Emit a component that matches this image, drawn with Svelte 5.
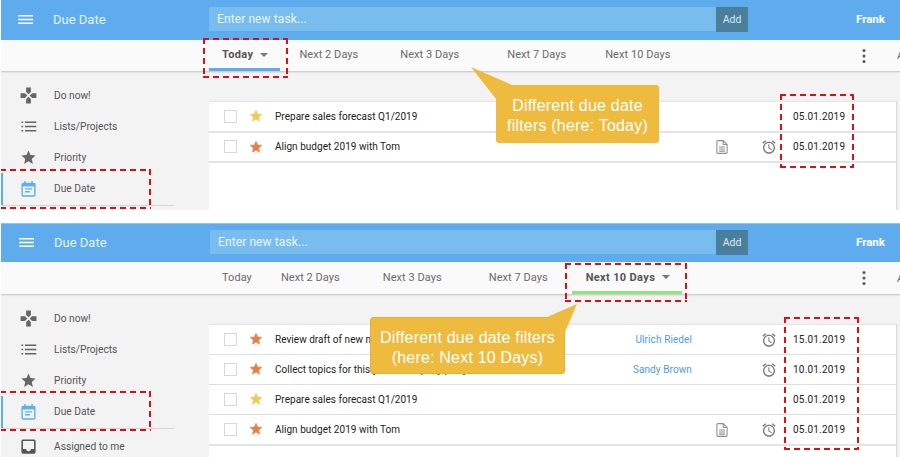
<script>
  const nav = [
    { label: 'Do now!', icon: 'games' },
    { label: 'Lists/Projects', icon: 'list' },
    { label: 'Priority', icon: 'star' },
    { label: 'Due Date', icon: 'cal', active: true },
    { label: 'Assigned to me', icon: 'inbox' }
  ];
  const t = (label, gap, active) => ({ label, gap, active });
  const panels = [
    {
      cls: 'first',
      accent: 'blue',
      tabs: [t('Today', 0, true), t('Next 2 Days', 19), t('Next 3 Days', 42), t('Next 7 Days', 48), t('Next 10 Days', 39)],
      tasks: [
        { text: 'Prepare sales forecast Q1/2019', star: 'y', date: '05.01.2019' },
        { text: 'Align budget 2019 with Tom', star: 'o', doc: true, alarm: true, date: '05.01.2019' }
      ]
    },
    {
      cls: 'second',
      accent: 'green',
      tabs: [t('Today', 13), t('Next 2 Days', 29), t('Next 3 Days', 43), t('Next 7 Days', 47), t('Next 10 Days', 24, true)],
      tasks: [
        { text: 'Review draft of new marketing plan', star: 'o', person: 'Ulrich Riedel', alarm: true, date: '15.01.2019' },
        { text: "Collect topics for this year's company party", star: 'o', person: 'Sandy Brown', alarm: true, date: '10.01.2019' },
        { text: 'Prepare sales forecast Q1/2019', star: 'y', date: '05.01.2019' },
        { text: 'Align budget 2019 with Tom', star: 'o', doc: true, alarm: true, date: '05.01.2019' }
      ]
    }
  ];
</script>

{#snippet navIcon(name)}
  <svg class="nav-icon {name}" viewBox="0 0 24 24">
    {#if name === 'games'}
      <path d="M15 7.500V2H9v5.500l3 3 3-3zM7.500 9H2v6h5.500l3-3-3-3zM9 16.500V22h6v-5.500l-3-3-3 3zM16.500 9l-3 3 3 3H22V9h-5.500z" />
    {:else if name === 'list'}
      <path d="M2 5h2.500v2H2zM7 5h16v2H7zM2 11h2.500v2H2zM7 11h16v2H7zM2 17h2.500v2H2zM7 17h16v2H7z" />
    {:else if name === 'star'}
      <path d="M12 17.300l6.200 3.700-1.600-7L22 9.200l-7.200-.6L12 2 9.200 8.600 2 9.200 7.500 14l-1.700 7z" />
    {:else if name === 'cal'}
      <path d="M6 1.500h2V4h8V1.500h2V4h1.500A2.500 2.500 0 0 1 22 6.500V21a2.500 2.500 0 0 1-2.500 2.500h-15A2.500 2.500 0 0 1 2 21V6.500A2.500 2.500 0 0 1 4.500 4H6zM4 9v12c0 .4.200.5.500.5h15c.3 0 .5-.1.500-.5V9zM7 11.500h10v2H7zM7 15.500h7v2H7z" />
    {:else}
      <path d="M19 3H5a2 2 0 0 0-2 2v14a2 2 0 0 0 2 2h14a2 2 0 0 0 2-2V5a2 2 0 0 0-2-2zm0 12h-4a3 3 0 0 1-6 0H5V5h14z" />
    {/if}
  </svg>
{/snippet}

{#snippet panel(p)}
  <section class="panel {p.cls}">
    <header class="bar">
      <svg class="burger" viewBox="0 0 15 9"><path d="M0 0h15v1.400H0zM0 3.800h15v1.400H0zM0 7.600h15V9H0z" /></svg>
      <span class="title">Due Date</span>
      <div class="entry"><span>Enter new task...</span></div>
      <div class="add">Add</div>
      <strong class="user">Frank</strong>
    </header>

    <nav class="tabs">
      {#each p.tabs as tab}
        <div class="tab" class:on={tab.active} class:green={tab.active && p.accent === 'green'} style="margin-left:{tab.gap}px">
          {tab.label}
          {#if tab.active}<i class="caret"></i>{/if}
        </div>
      {/each}
      <svg class="kebab" viewBox="0 0 4 16"><circle cx="2" cy="2.500" r="1.500" /><circle cx="2" cy="8" r="1.500" /><circle cx="2" cy="13.500" r="1.500" /></svg>
      <span class="clip">A</span>
    </nav>

    <div class="body">
      <aside class="side">
        {#each nav as item}
          <div class="item" class:current={item.active}>
            <span class="icon-cell">{@render navIcon(item.icon)}</span>
            <span>{item.label}</span>
          </div>
        {/each}
      </aside>

      <div class="card">
        {#each p.tasks as task}
          <div class="row">
            <div class="lead">
              <span class="check"></span>
              <svg class="task-star {task.star}" viewBox="0 0 24 24"><path d="M12 17.300l6.200 3.700-1.600-7L22 9.200l-7.200-.6L12 2 9.200 8.600 2 9.200 7.500 14l-1.700 7z" /></svg>
            </div>
            <div class="text">{task.text}</div>
            <div class="person">{task.person ?? ''}</div>
            <div class="mid">
              {#if task.doc}
                <svg class="doc" viewBox="0 0 14 17"><path fill="none" stroke-width="1.300" d="M2 .8h6.500l4.700 4.700V15a1.200 1.200 0 0 1-1.200 1.200H2A1.200 1.200 0 0 1 .8 15V2A1.200 1.200 0 0 1 2 .8zM8.500 1v4.500H13M3.500 8.500h7M3.500 11h7M3.500 13.500h7" /></svg>
              {/if}
            </div>
            <div class="mid narrow">
              {#if task.alarm}
                <svg class="alarm" viewBox="0 0 24 24"><path d="M22 5.720l-4.600-3.860-1.290 1.530 4.600 3.860L22 5.720zM7.880 3.390L6.600 1.860 2 5.710l1.290 1.530 4.590-3.850zM12.500 8H11v6l4.750 2.850.75-1.230-4-2.370V8zM12 4c-4.970 0-9 4.030-9 9s4.030 9 9 9 9-4.030 9-9-4.030-9-9-9zm0 16c-3.870 0-7-3.130-7-7s3.130-7 7-7 7 3.130 7 7-3.130 7-7 7z" /></svg>
              {/if}
            </div>
            <div class="date">{task.date}</div>
          </div>
        {/each}
      </div>
    </div>

    {#if p.cls === 'first'}
      <div class="mark m-tab1"></div>
      <div class="mark open m-side"></div>
      <div class="mark m-date1"></div>
      <div class="note n1">
        <svg class="tail" viewBox="0 0 45 32"><path d="M0 0 L41 18 L41 32 L25 32 Z" /></svg>
        Different due date<br />filters (here: Today)
      </div>
    {:else}
      <div class="mark m-tab2"></div>
      <div class="mark open m-side two"></div>
      <div class="mark m-date2"></div>
      <div class="note n2">
        <svg class="tail" viewBox="0 0 35 42"><path d="M35 0 L23 28 L5 28 L5 13 Z" /></svg>
        Different due date filters<br />(here: Next 10 Days)
      </div>
    {/if}
  </section>
{/snippet}

<main class="page">
  {#each panels as p}
    {@render panel(p)}
  {/each}
</main>

<style>
  :global(body) { background: #fff; }
  .page {
    width: 900px;
    height: 457px;
    padding-left: 1px;
    box-sizing: border-box;
    overflow: hidden;
    font-family: Roboto, "Liberation Sans", sans-serif;
    display: flex;
    flex-direction: column;
    gap: 13px;
  }
  .panel {
    position: relative;
    height: 210px;
    overflow: hidden;
    background: #f3f3f3;
    flex: none;
  }
  .panel.second { height: 234px; }
  .bar {
    height: 40px;
    box-sizing: border-box;
    padding-bottom: 2px;
    background: #5eacee;
    display: flex;
    align-items: center;
    color: #fff;
    position: relative;
  }
  .second .bar { border-top: 1px solid #8fc6f4; height: 39px; }
  .burger { width: 15px; height: 9px; margin-left: 17px; fill: #fff; flex: none; }
  .second .burger { margin-left: 18px; }
  .title { margin-left: 20px; width: 156px; font-size: 13px; color: #e4f2fd; }
  .entry {
    width: 507px;
    height: 24px;
    background: #79bdee;
    display: flex;
    align-items: center;
    padding-left: 8px;
    box-sizing: border-box;
    font-size: 12px;
    color: #eaf5fc;
    letter-spacing: .1px;
  }
  .second .entry { width: 506px; }
  .add {
    width: 32px;
    height: 25px;
    background: #4a7f9c;
    color: #d9e8f0;
    font-size: 10.500px;
    display: flex;
    align-items: center;
    justify-content: center;
  }
  .user { margin-left: 108px; font-size: 11.500px; font-weight: 700; }
  .tabs {
    height: 31px;
    display: flex;
    align-items: center;
    background: #fafafa;
    border-bottom: 1px solid #cfcfcf;
    box-shadow: 0 1px 1px #e4e4e4;
    padding-left: 208px;
    font-size: 11px;
    color: #6a6a6a;
    letter-spacing: .05px;
    position: relative;
    z-index: 1;
  }
  .second .tabs { height: 32px; }
  .tab { white-space: nowrap; position: relative; height: 100%; display: flex; align-items: center; padding-bottom: 2px; box-sizing: border-box; }
  .tab.on {
    font-weight: 700;
    color: #555;
    letter-spacing: .35px;
    padding: 0 12px 2px 13px;
    align-self: stretch;
  }
  .second .tab.on { padding-left: 14px; }
  .tab.on::after {
    content: '';
    position: absolute;
    left: 0;
    right: 0;
    bottom: 0;
    height: 3px;
    background: #5eacee;
  }
  .tab.on.green::after { background: #93e481; }
  .caret {
    width: 0;
    height: 0;
    margin-left: 7px;
    border: 4px solid transparent;
    border-top: 4px solid #777;
    border-bottom: 0;
  }
  .kebab { width: 4px; height: 16px; margin-left: auto; margin-right: 31px; fill: #555; }
  .clip { width: 3px; overflow: hidden; flex: none; }
  .body { display: flex; position: relative; height: 200px; }
  .side { width: 208px; flex: none; padding-top: 8px; box-sizing: border-box; font-size: 10.200px; color: #555; }
  .item { height: 31px; display: flex; align-items: center; position: relative; width: 173px; }
  .item.current { height: 33px; padding-bottom: 1px; box-sizing: border-box; border-bottom: 1px solid #d6d6d6; margin-bottom: 2px; }
  .item.current::before {
    content: '';
    position: absolute;
    left: 0;
    top: 0;
    bottom: 0;
    width: 2px;
    background: #5eacee;
  }
  .icon-cell { width: 53px; height: 19px; display: flex; justify-content: center; align-items: center; padding-left: 2px; box-sizing: border-box; }
  .nav-icon { width: 17px; height: 17px; fill: #666; flex: none; }
  .nav-icon.games { width: 19px; height: 19px; }
  .nav-icon.inbox { width: 19px; height: 19px; fill: #555; }
  .nav-icon.cal { fill: #5cb3ec; }
  .card {
    width: 687px;
    height: 190px;
    margin-top: 29px;
    background: #fff;
    border-top: 1px solid #e6e6e6;
    box-shadow: 1px 0 1px #d9d9d9;
    flex: none;
  }
  .row {
    height: 29px;
    border-bottom: 2px solid #e4e4e4;
    display: grid;
    grid-template-columns: 66px 1fr 102px 60px 34px 110px;
    align-items: center;
    font-size: 10px;
    color: #222;
    letter-spacing: .03px;
  }
  .first .row:last-child { height: 28px; }
  .second .row { border-bottom: 1px solid #dedede; }
  .second .row:last-child { border-bottom: 2px solid #e4e4e4; }
  .lead { display: flex; align-items: center; padding-left: 15px; }
  .check { width: 11px; height: 11px; border: 1px solid #d8d8d8; background: #fff; margin-top: -1px; }
  .task-star { width: 14px; height: 14px; margin-left: 12px; margin-top: -1px; stroke-width: 1; stroke-linejoin: round; }
  .task-star.y { fill: #f0ca55; stroke: #f0ca55; }
  .task-star.o { fill: #e58146; stroke: #e58146; }
  .text, .person, .date { padding-bottom: 1px; }
  .text { white-space: nowrap; overflow: hidden; }
  .person { text-align: right; color: #4f9bd9; white-space: nowrap; letter-spacing: .1px; }
  .mid { display: flex; justify-content: center; align-items: center; }
  .doc { width: 12px; height: 14px; stroke: #8e8e8e; }
  .alarm { width: 16px; height: 16px; fill: #777; }
  .date { padding-left: 7px; letter-spacing: .2px; }

  .mark {
    --c: #dc0f15;
    position: absolute;
    box-sizing: border-box;
    z-index: 3;
    background:
      repeating-linear-gradient(90deg, var(--c) 0 6px, transparent 6px 10px) top / 100% 2px no-repeat,
      repeating-linear-gradient(90deg, var(--c) 0 6px, transparent 6px 10px) bottom / 100% 2px no-repeat,
      repeating-linear-gradient(180deg, var(--c) 0 6px, transparent 6px 10px) left / 2px 100% no-repeat,
      repeating-linear-gradient(180deg, var(--c) 0 6px, transparent 6px 10px) right / 2px 100% no-repeat;
  }
  .mark.open {
    background:
      repeating-linear-gradient(90deg, var(--c) 0 6px, transparent 6px 10px) top / 100% 2px no-repeat,
      repeating-linear-gradient(90deg, var(--c) 0 6px, transparent 6px 10px) bottom / 100% 2px no-repeat,
      repeating-linear-gradient(180deg, var(--c) 0 6px, transparent 6px 10px) right / 2px 100% no-repeat;
  }
  .m-tab1 { left: 202px; top: 38px; width: 85px; height: 40px; }
  .m-side { left: -1px; top: 169px; width: 151px; height: 40px; }
  .m-side.two { top: 168px; }
  .m-date1 { left: 779px; top: 94px; width: 74px; height: 74px; }
  .m-tab2 { left: 564px; top: 40px; width: 122px; height: 39px; }
  .m-date2 { left: 783px; top: 94px; width: 75px; height: 133px; }

  .note {
    position: absolute;
    z-index: 4;
    background: #efbb3f;
    border-radius: 3px;
    color: #fff;
    font-family: "Liberation Sans", Arial, sans-serif;
    font-size: 16px;
    letter-spacing: .2px;
    line-height: 20px;
    text-align: center;
    box-sizing: border-box;
    padding-top: 11px;
  }
  .tail { position: absolute; fill: #efbb3f; }
  .n1 { left: 495px; top: 85px; width: 163px; height: 58px; }
  .n1 .tail { left: -25px; top: -18px; width: 45px; height: 32px; }
  .n2 { left: 369px; top: 94px; width: 195px; height: 57px; border: 1px solid #e6b033; padding-top: 10px; }
  .n2 .tail { left: 171px; top: -14px; width: 35px; height: 42px; }
</style>
